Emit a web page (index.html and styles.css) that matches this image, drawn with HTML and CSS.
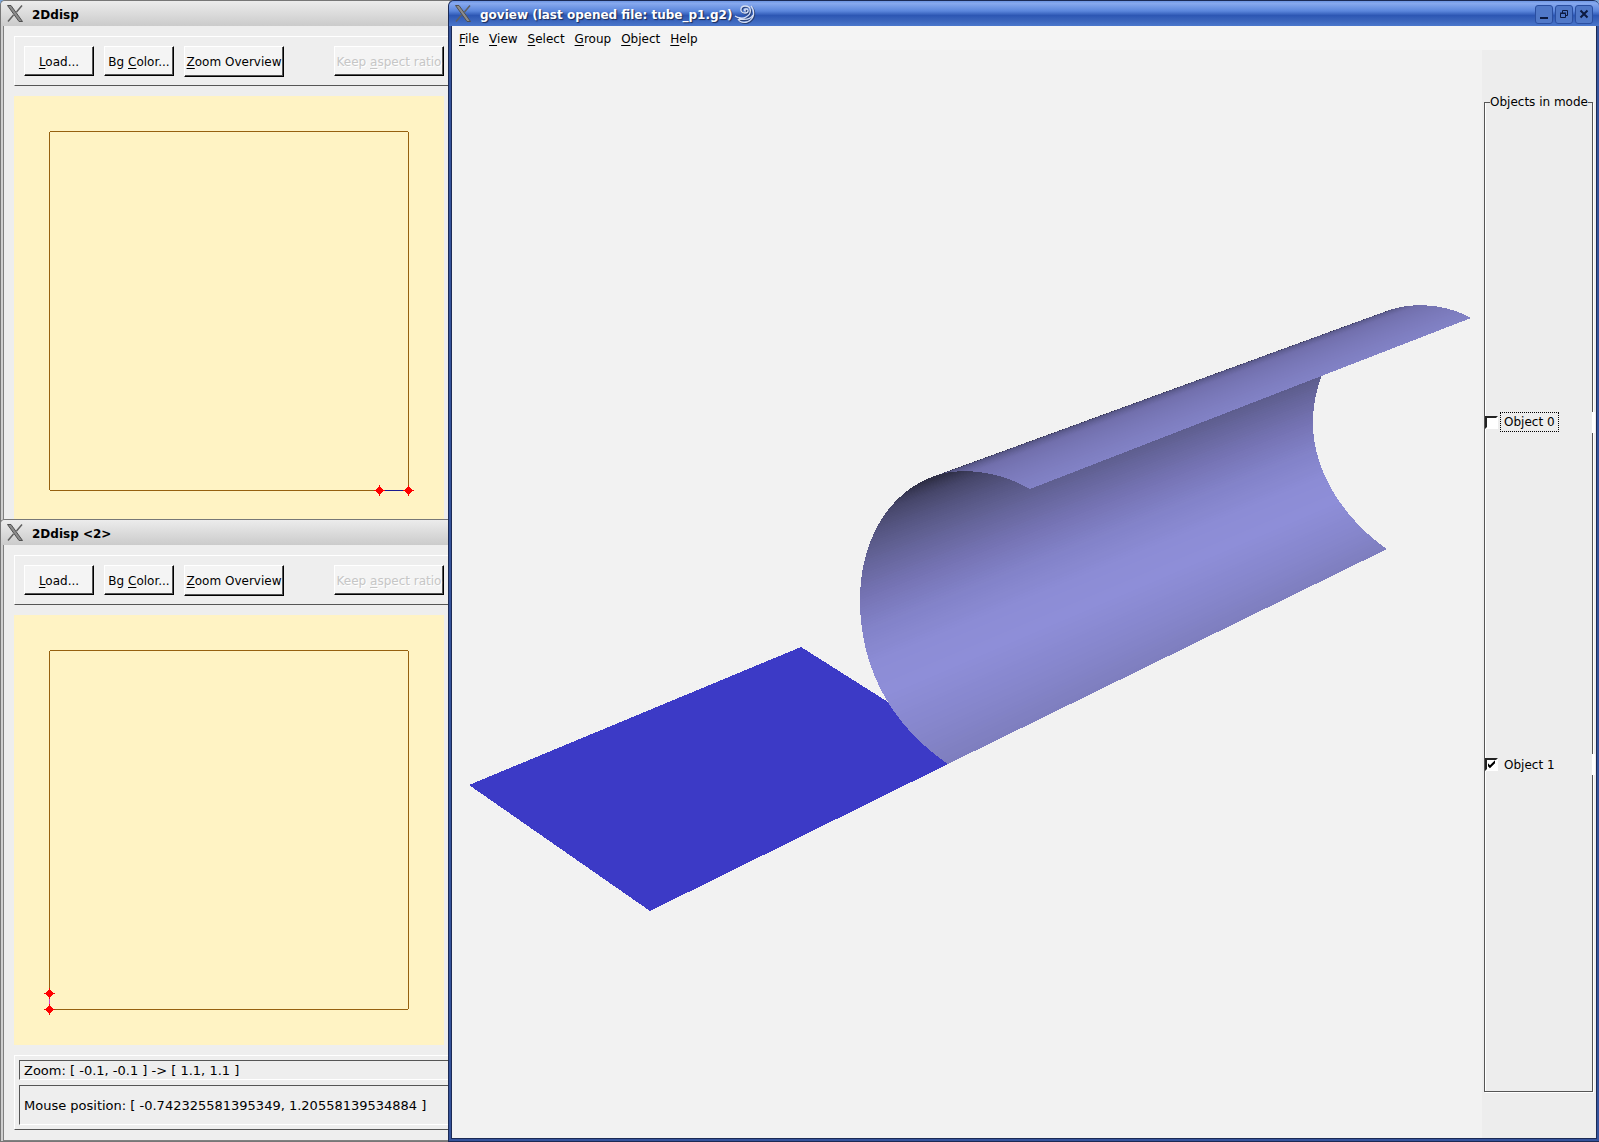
FILE: index.html
```html
<!DOCTYPE html>
<html lang="en">
<head>
<meta charset="utf-8">
<title>goview</title>
<link rel="stylesheet" href="styles.css">
</head>
<body>
<svg class="defs" aria-hidden="true">
  <symbol id="xlogo" viewBox="0 0 16 17">
    <path class="x-thin" d="M15 0.500L9.500 7M6.500 10L1 16.500"/>
    <path class="x-thick" d="M0.500 0.500h3.500l11.500 16h-3.500z"/>
  </symbol>
  <symbol id="cross" viewBox="0 0 11 11">
    <path d="M5 0h1v11h-1zM0 5h11v1H0zM4 2h3v7H4zM2 4h7v3H2zM3 3h5v5H3z"/>
  </symbol>
</svg>
<main class="desktop">
  <section class="window tool-window first">
    <header class="titlebar"><svg class="xlogo"><use href="#xlogo"/></svg><h1>2Ddisp</h1></header>
    <div class="tool-body">
      <div class="toolbar">
        <button class="small"><u>L</u>oad...</button>
        <button class="small">Bg <u>C</u>olor...</button>
        <button class="overview"><u>Z</u>oom Overview</button>
        <button class="aspect" disabled>Keep <u>a</u>spect ratio</button>
      </div>
      <svg class="plot" viewBox="0 0 430 430">
        <path class="domain" d="M36 35.500H394M394.500 36V394M36 394.500H394M35.500 36V394"/>
        <path class="edge-blue" d="M366 394.500H394"/>
        <use class="mark" href="#cross" x="360" y="389" width="11" height="11"/>
        <use class="mark" href="#cross" x="389" y="389" width="11" height="11"/>
      </svg>
    </div>
  </section>

  <section class="window tool-window second">
    <header class="titlebar"><svg class="xlogo"><use href="#xlogo"/></svg><h1>2Ddisp &lt;2&gt;</h1></header>
    <div class="tool-body">
      <div class="toolbar">
        <button class="small"><u>L</u>oad...</button>
        <button class="small">Bg <u>C</u>olor...</button>
        <button class="overview"><u>Z</u>oom Overview</button>
        <button class="aspect" disabled>Keep <u>a</u>spect ratio</button>
      </div>
      <svg class="plot" viewBox="0 0 430 430">
        <path class="domain" d="M36 35.500H394M394.500 36V394M36 394.500H394M35.500 36V394"/>
        <path class="edge-violet" d="M35.500 380V394"/>
        <use class="mark" href="#cross" x="30" y="373" width="11" height="11"/>
        <use class="mark" href="#cross" x="30" y="389" width="11" height="11"/>
      </svg>
      <div class="status">
        <p class="zoom">Zoom: [ -0.1, -0.1 ] -&gt; [ 1.1, 1.1 ]</p>
        <p class="mouse">Mouse position: [ -0.742325581395349, 1.20558139534884 ]</p>
      </div>
    </div>
  </section>

  <section class="window main-window">
    <header class="titlebar">
      <svg class="xlogo"><use href="#xlogo"/></svg>
      <h1>goview (last opened file: tube_p1.g2)</h1>
      <svg class="swirl" viewBox="0 0 20 20">
        <path class="shade" d="M1 12c3 2 8 3 11 1c6-3 6-11-1-11c-5 0-6 7 0 7c4 0 4-4 1-4c-2 0-2 2 0 2M17 2c4 5 4 13-4 16c-5 1-8-1-9-3M19 11c-2 4-8 5-14 4"/>
        <path d="M0 11c3 2 8 3 11 1c6-3 6-11-1-11c-5 0-6 7 0 7c4 0 4-4 1-4c-2 0-2 2 0 2M16 1c4 5 4 13-4 16c-5 1-8-1-9-3M18 10c-2 4-8 5-14 4"/>
      </svg>
      <div class="controls">
        <button aria-label="Minimize"><svg viewBox="0 0 16 16"><path class="heavy" d="M4 12h8"/></svg></button>
        <button aria-label="Restore"><svg viewBox="0 0 16 16"><path d="M4.500 7.500h5v4h-5zM6.500 7V4.500h5V9.500H10M4 7h6"/></svg></button>
        <button aria-label="Close"><svg viewBox="0 0 16 16"><path class="heavy" d="M4.500 4.500l7 7M11.500 4.500l-7 7"/></svg></button>
      </div>
    </header>
    <nav class="menubar">
      <a href="#file"><u>F</u>ile</a>
      <a href="#view"><u>V</u>iew</a>
      <a href="#select"><u>S</u>elect</a>
      <a href="#group"><u>G</u>roup</a>
      <a href="#object"><u>O</u>bject</a>
      <a href="#help"><u>H</u>elp</a>
    </nav>
    <div class="workspace">
      <svg class="scene" viewBox="452 50 1030 1088" preserveAspectRatio="xMinYMin meet">
        <path class="plane" d="M469 785L801 647L888 702L948 764L650 911Z"/>
        <g id="tube"></g>
      </svg>
      <aside class="side">
        <fieldset class="models">
          <legend>Objects in mode</legend>
          <label class="object focused"><input type="checkbox"><span>Object 0</span></label>
          <label class="object"><input type="checkbox" checked><span>Object 1</span></label>
        </fieldset>
      </aside>
    </div>
  </section>
</main>
<script src="tube.js"></script>
</body>
</html>
```

FILE: styles.css
```css
* { box-sizing: border-box; }
body {
  margin: 0;
  font: 12px/16px "DejaVu Sans", sans-serif;
  color: #000;
  background: #7da7d9;
}
u { text-underline-offset: 2px; }
.defs { position: absolute; width: 0; height: 0; }
.desktop { position: relative; height: 100vh; overflow: hidden; }

.window { position: absolute; display: flex; flex-direction: column; overflow: hidden; }
.titlebar { display: flex; align-items: center; height: 25px; flex: none; padding-left: 6px; }
.titlebar h1 { margin: 0 0 0 9px; padding-top: 2px; font-size: 12px; line-height: 16px; font-weight: bold; white-space: nowrap; }
.xlogo { width: 16px; height: 17px; flex: none; }
.x-thick { fill: #8c8c8c; stroke: #505050; stroke-width: 1; }
.x-thin { stroke: #606060; stroke-width: 1.5; fill: none; }

.tool-window { left: 0; width: 480px; background: #cfcfcf; border-left: 1px solid #777; border-top: 1px solid #777; border-radius: 5px 0 0 0; }
.tool-window .titlebar { background: linear-gradient(#ececec, #cbcbcb); }
.first { top: 0; height: 640px; }
.second { top: 519px; bottom: 0; border-bottom: 1px solid #777; }
.tool-body { flex: 1; margin: 0 0 2px 2px; padding: 10px; border: 1px solid #808080; border-width: 0 0 1px 1px; background: #eee; }
.toolbar { display: flex; align-items: flex-start; gap: 10px; height: 50px; padding: 9px; border: 1px solid #fff; border-bottom-color: #555; }
.toolbar button {
  height: 30px; padding: 2px 0 0; font: inherit; white-space: nowrap; color: #000; background: #f4f4f4;
  border: 1px solid #fff; border-right: 1px solid #000; border-bottom: 1px solid #000;
  box-shadow: inset -1px -1px #555;
}
.toolbar .small { width: 70px; }
.toolbar .overview { width: 100px; height: 31px; padding-top: 1px; }
.toolbar .aspect { width: 110px; margin-left: 40px; color: #c6c6c6; text-shadow: 1px 1px #fff; }
.plot { display: block; width: 430px; height: 430px; margin-top: 10px; background: #fff3c4; shape-rendering: crispEdges; }
.domain { fill: none; stroke: #96600f; }
.edge-blue { stroke: #1a1a90; }
.edge-violet { stroke: #d040d0; }
.mark { fill: #f00; }
.status { display: flex; flex-direction: column; gap: 5px; height: 75px; margin-top: 10px; padding: 4px; border: 1px solid #fff; border-bottom-color: #555; font-size: 13px; }
.status p { margin: 0; padding: 0 4px; border: 1px solid #555; border-bottom-color: #fff; white-space: nowrap; }
.status .zoom { height: 20px; line-height: 20px; }
.status .mouse { height: 40px; line-height: 40px; }

.main-window { left: 448px; right: 0; top: 0; bottom: 0; background: #35539b; border: 1px solid #1b2a55; border-right: 0; border-radius: 6px 6px 0 0; }
.main-window .titlebar {
  color: #fff; text-shadow: 1px 1px 1px #1b2a55;
  background: linear-gradient(#6f97e4 0, #86a8ee 10%, #5b86dc 40%, #2d57b4 58%, #3c66bd 80%, #4a77cc 100%);
}
.main-window .x-thick { fill: #6b80ac; stroke: #38496f; }
.main-window .x-thin { stroke: #38496f; }
.swirl { width: 20px; height: 20px; flex: none; margin: 2px 0 0 3px; fill: none; stroke: #d5def2; stroke-width: 1.3; overflow: visible; }
.shade { stroke: #2b4277; }
.controls { display: flex; gap: 2px; margin: 1px 6px 0 auto; }
.controls button { width: 18px; height: 19px; padding: 0; border: 1px solid #2a4ea0; border-radius: 3px; background: #5078c8; }
.controls svg { display: block; width: 16px; height: 16px; fill: none; stroke: #0c1a40; }
.heavy { stroke-width: 2; }
.menubar { display: flex; gap: 10px; height: 24px; flex: none; margin: 0 2px; padding: 5px 7px 0; border: 1px solid #1b2a55; border-width: 0 1px; background: #f4f4f4; }
.menubar a { color: #000; text-decoration: none; }
.workspace { display: flex; flex: 1; min-height: 0; margin: 0 2px 2px; border: 1px solid #1b2a55; border-top: 0; background: #f2f2f2; }
.scene { flex: 1; min-width: 0; height: 100%; shape-rendering: crispEdges; }
.plane { fill: #3c3ac6; }
.side { width: 114px; flex: none; padding: 44px 3px 46px 2px; background: #ededed; }
.models { display: grid; grid-template-rows: 48fr 51fr 47fr; align-items: end; height: 100%; min-width: 0; margin: 0; padding: 0; border: 1px solid #555; box-shadow: 1px 1px #fff, inset 1px 0 #fff; }
.models legend { margin-left: 5px; padding: 0; white-space: nowrap; }
.object { display: flex; align-items: center; gap: 2px; height: 21px; margin-right: -3px; border-right: 3px solid #fff; }
.object input { appearance: none; width: 13px; height: 13px; margin: 0; background: #fff; border: 2px solid #000; border-color: #222 #fff #fff #222; }
.object input:checked::before {
  content: ""; display: block; width: 9px; height: 9px; background: #000;
  clip-path: polygon(11% 33%, 33% 56%, 89% 0, 89% 33%, 33% 89%, 11% 67%);
}
.object span { padding: 1px 3px; border: 1px dotted transparent; }
.focused span { border-color: #000; }
```

FILE: tube.js
```js
// The tube is a ruled surface between a front and a back rim, each given as
// three matching cubic curves: bottom edge to left side, left side to top, top flap.
const front = [
  [[948, 764], [881, 718], [860, 655], [860, 600]],
  [[860, 600], [860, 542], [888, 489], [941, 474]],
  [[941, 474], [965, 468], [998, 471], [1030, 489]]
];
const back = [
  [[1387, 549], [1345, 520], [1313, 472], [1313, 423]],
  [[1313, 423], [1313, 372], [1342, 325], [1387, 311]],
  [[1387, 311], [1410, 302], [1444, 303], [1471, 318]]
];
const shades = [
  [[0, [126, 126, 190]], [0.2, [134, 134, 204]], [0.45, [142, 142, 216]], [0.62, [140, 140, 213]], [0.82, [130, 130, 200]], [1, [118, 116, 181]]],
  [[0, [118, 116, 181]], [0.3, [94, 94, 143]], [0.6, [70, 70, 106]], [0.8, [48, 48, 72]], [1, [46, 46, 70]]],
  [[0, [77, 77, 120]], [0.4, [113, 111, 172]], [1, [130, 130, 198]]]
];
const STEPS = 60;

function pointOn(c, t) {
  const u = 1 - t;
  return [0, 1].map(i =>
    u * u * u * c[0][i] + 3 * u * u * t * c[1][i] + 3 * u * t * t * c[2][i] + t * t * t * c[3][i]);
}

function shadeAt(stops, t) {
  let i = 0;
  while (i < stops.length - 2 && t > stops[i + 1][0]) i++;
  const f = (t - stops[i][0]) / (stops[i + 1][0] - stops[i][0]);
  return 'rgb(' + stops[i][1].map((v, k) => Math.round(v + (stops[i + 1][1][k] - v) * f)).join() + ')';
}

const tube = document.getElementById('tube');
for (let k = 0; k < front.length; k++) {
  for (let i = 0; i < STEPS; i++) {
    const a = i / STEPS;
    const b = (i + 1) / STEPS;
    const strip = document.createElementNS('http://www.w3.org/2000/svg', 'polygon');
    strip.setAttribute('points', [
      pointOn(front[k], a), pointOn(back[k], a), pointOn(back[k], b), pointOn(front[k], b)
    ].join(' '));
    strip.setAttribute('fill', shadeAt(shades[k], (a + b) / 2));
    tube.appendChild(strip);
  }
}
```
